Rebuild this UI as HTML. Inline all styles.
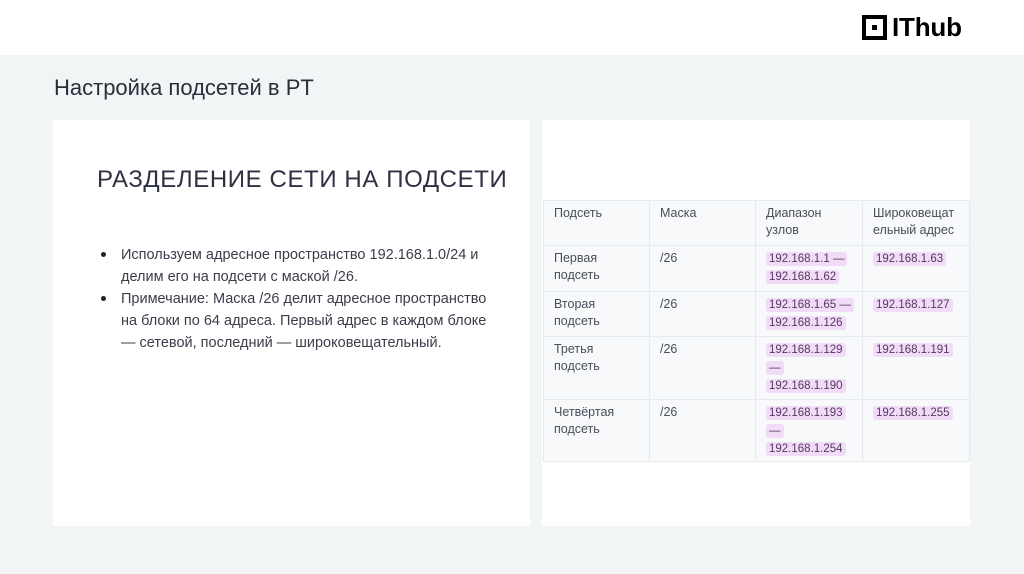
<!DOCTYPE html><html><head><meta charset="utf-8"><style>
body{margin:0;width:1024px;height:574px;background:#f2f5f6;font-family:"Liberation Sans",sans-serif;position:relative;overflow:hidden}
.hdr{position:absolute;left:0;top:0;width:1024px;height:55px;background:#fff}
.logo{position:absolute;left:862px;top:12px;display:flex;align-items:center}
.sq{width:17px;height:17px;border:4px solid #000;position:relative}
.sq:after{content:"";position:absolute;left:6px;top:6px;width:5px;height:5px;background:#000}
.lt{font-weight:bold;font-size:26px;margin-left:5px;letter-spacing:-0.2px}
h1{position:absolute;left:54px;top:75px;margin:0;font-weight:normal;font-size:22px;color:#2a2d3a}
.card{position:absolute;background:#fff;top:120px;height:406px}
h2{position:absolute;left:97px;top:166px;margin:0;font-weight:normal;font-size:24px;color:#2e3142;letter-spacing:0.6px}
ul{position:absolute;left:101px;top:244px;margin:0;padding:0;list-style:none;width:400px;font-size:14.5px;line-height:22px;color:#3a3d4a}
li{position:relative;padding-left:20px}
li:before{content:"";position:absolute;left:0;top:8px;width:5px;height:5px;border-radius:50%;background:#222}
table{position:absolute;left:543px;top:200px;width:427px;border-collapse:collapse;background:#f7f9fb;font-size:12.5px;color:#4a4d5a;line-height:17px}
td{border:1px solid #e6e9ee;vertical-align:top;padding:4px 10px 2px 10px}
.p{background:#f1dcf7;color:#5a3466;font-size:11.5px;padding:1px 3px;border-radius:3px;line-height:17px;-webkit-box-decoration-break:clone}
</style></head><body>
<div class="hdr"><div class="logo"><div class="sq"></div><span class="lt">IThub</span></div></div>
<h1>Настройка подсетей в PT</h1>
<div class="card" style="left:53px;width:477px"></div>
<div class="card" style="left:542px;width:428px"></div>
<h2>РАЗДЕЛЕНИЕ СЕТИ НА ПОДСЕТИ</h2>
<ul><li>Используем адресное пространство 192.168.1.0/24 и делим его на подсети с маской /26.</li><li>Примечание: Маска /26 делит адресное пространство на блоки по 64 адреса. Первый адрес в каждом блоке — сетевой, последний — широковещательный.</li></ul>
<table>
<tr style="height:45px"><td style="width:85px">Подсеть</td><td style="width:85px">Маска</td><td style="width:86px">Диапазон узлов</td><td>Широковещат ельный адрес</td></tr>
<tr style="height:46px"><td>Первая подсеть</td><td>/26</td><td><span class="p">192.168.1.1 — 192.168.1.62</span></td><td><span class="p">192.168.1.63</span></td></tr>
<tr style="height:45px"><td>Вторая подсеть</td><td>/26</td><td><span class="p">192.168.1.65 — 192.168.1.126</span></td><td><span class="p">192.168.1.127</span></td></tr>
<tr style="height:63px"><td>Третья подсеть</td><td>/26</td><td><span class="p">192.168.1.129 — 192.168.1.190</span></td><td><span class="p">192.168.1.191</span></td></tr>
<tr style="height:62px"><td>Четвёртая подсеть</td><td>/26</td><td><span class="p">192.168.1.193 — 192.168.1.254</span></td><td><span class="p">192.168.1.255</span></td></tr>
</table>
</body></html>
